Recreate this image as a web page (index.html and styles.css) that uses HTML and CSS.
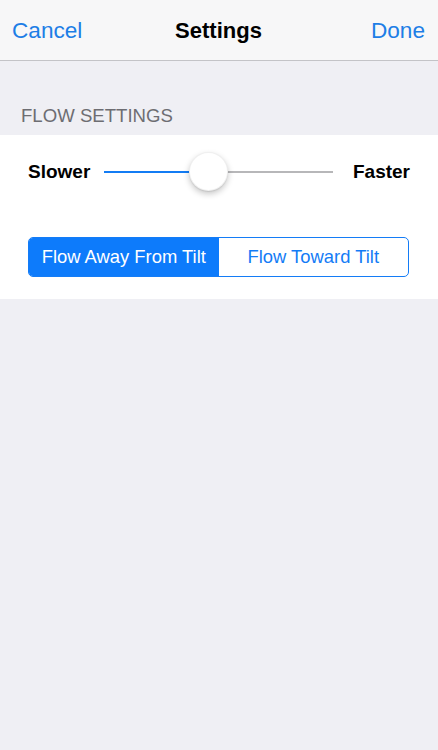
FILE: index.html
```html
<!DOCTYPE html>
<html>
<head>
<meta charset="utf-8">
<link rel="stylesheet" href="styles.css">
</head>
<body>
<div class="nav">
  <span class="nav-btn nav-left">Cancel</span>
  <span class="nav-title">Settings</span>
  <span class="nav-btn nav-right">Done</span>
</div>
<div class="section-header">FLOW SETTINGS</div>
<div class="section">
  <div class="slider-row">
    <span class="slider-label">Slower</span>
    <div class="slider">
      <div class="track-fill" style="width: 37%"></div>
      <div class="track-rest"></div>
      <div class="thumb" style="left: 85px"></div>
    </div>
    <span class="slider-label">Faster</span>
  </div>
  <div class="segmented">
    <div class="seg seg-active">Flow Away From Tilt</div>
    <div class="seg">Flow Toward Tilt</div>
  </div>
</div>
</body>
</html>
```
FILE: styles.css
```css
html, body {
  margin: 0;
  padding: 0;
}
body {
  background: #efeff4;
  font-family: "Liberation Sans", Arial, sans-serif;
  width: 438px;
  height: 750px;
}
.nav {
  height: 58px;
  padding: 2px 13px 0 12px;
  background: #f7f7f8;
  border-bottom: 1px solid #c3c3c7;
  display: grid;
  grid-template-columns: 1fr auto 1fr;
  align-items: center;
}
.nav-btn {
  color: #1d7ee6;
  font-size: 22.6px;
  line-height: 22px;
}
.nav-left {
  justify-self: start;
}
.nav-right {
  justify-self: end;
}
.nav-title {
  color: #000;
  font-size: 22px;
  font-weight: bold;
  line-height: 22px;
}
.section-header {
  padding: 44px 0 8px 21px;
  font-size: 18.6px;
  line-height: 22px;
  color: #6d6d72;
}
.section {
  background: #fff;
  padding: 17px 28px 22px 28px;
  height: 125px;
}
.slider-row {
  display: flex;
  align-items: center;
  height: 39px;
}
.slider-label {
  font-size: 19px;
  font-weight: bold;
  color: #000;
}
.slider {
  flex: 1;
  position: relative;
  display: flex;
  align-items: center;
  height: 39px;
  margin: 0 20px 0 14px;
}
.track-fill {
  height: 2px;
  background: #137cf4;
}
.track-rest {
  flex: 1;
  height: 2px;
  background: #b7b7b9;
}
.thumb {
  position: absolute;
  top: 0;
  width: 39px;
  height: 39px;
  border-radius: 50%;
  background: #fff;
  box-sizing: border-box;
  border: 1px solid rgba(0,0,0,0.06);
  box-shadow: 0 3px 6px rgba(0,0,0,0.22), 0 1px 1px rgba(0,0,0,0.08);
}
.segmented {
  margin: 46px 1px 0 0;
  display: flex;
  height: 40px;
  box-sizing: border-box;
  border: 1px solid #147cf6;
  border-radius: 5px;
  overflow: hidden;
}
.seg {
  flex: 1;
  display: flex;
  align-items: center;
  justify-content: center;
  font-size: 18.4px;
  color: #147cf6;
}
.seg-active {
  background: #0d7bfb;
  color: #fff;
}
```
